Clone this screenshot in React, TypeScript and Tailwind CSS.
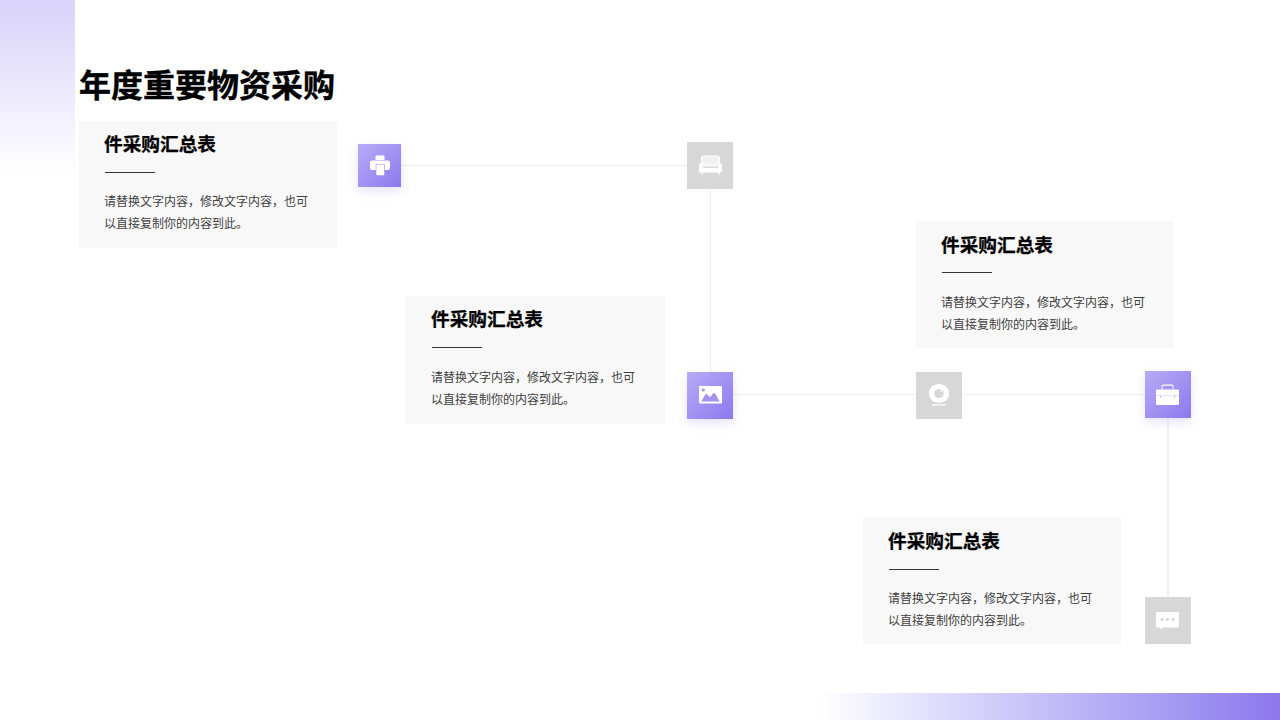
const purple = 'absolute bg-gradient-to-br from-[#b8abf6] to-[#8d79ed] shadow-[0_4px_10px_rgba(141,121,237,0.22)] flex items-center justify-center';
const gray = 'absolute bg-[#d7d7d7] flex items-center justify-center';
const line = 'absolute bg-[#ededed]';

interface CardProps {
    className: string;
    titleClass: string;
    ruleClass: string;
    bodyClass: string;
}

function Card({ className, titleClass, ruleClass, bodyClass }: CardProps) {
    return (
        <div className={`absolute w-[258px] bg-[#f8f8f8] pl-[25px] flex flex-col items-start ${className}`}>
            <div className={`text-[18.67px] leading-[28px] font-bold text-black [-webkit-text-stroke:0.25px_black] ${titleClass}`}>件采购汇总表</div>
            <div className={`w-[50px] h-px bg-[#333333] ml-px ${ruleClass}`}></div>
            <p className={`w-[212px] text-[12px] leading-[22px] text-[#404040] ${bodyClass}`}>
                请替换文字内容，修改文字内容，也可以直接复制你的内容到此。
            </p>
        </div>
    );
}

export default function App() {
    return (
        <div className="relative w-[1280px] h-[720px] overflow-hidden bg-white pl-[79px] pt-[60px] font-['Noto_Sans_CJK_SC','Noto_Sans',sans-serif]">
            {/* corner decorations */}
            <div className="absolute left-0 top-0 w-[75px] h-[174px] bg-gradient-to-b from-[#d9d2fa] to-white"></div>
            <div className="absolute right-0 bottom-0 w-[460px] h-[27px] bg-gradient-to-r from-white to-[#8d78ec]"></div>

            <h1 className="relative text-[32px] leading-[46px] font-bold text-black whitespace-nowrap [-webkit-text-stroke:0.4px_black]">年度重要物资采购</h1>

            {/* connector lines */}
            <div className={`${line} left-[401px] top-[165px] w-[286px] h-px`}></div>
            <div className={`${line} left-[710px] top-[188px] w-px h-[184px]`}></div>
            <div className={`${line} left-[733px] top-[394px] w-[183px] h-px`}></div>
            <div className={`${line} left-[962px] top-[394px] w-[183px] h-px`}></div>
            <div className="absolute bg-[#f3f3f3] left-[1167px] top-[417px] w-[2px] h-[181px]"></div>

            <Card className="left-[79px] top-[121px] h-[127px]" titleClass="mt-[8px]" ruleClass="mt-[15px]" bodyClass="mt-[17px]" />
            <Card className="left-[405px] top-[296px] h-[128px] !w-[260px] !pl-[26px]" titleClass="mt-[8px]" ruleClass="mt-[15px]" bodyClass="mt-[18px]" />
            <Card className="left-[916px] top-[221px] h-[127px]" titleClass="mt-[9px]" ruleClass="mt-[14px]" bodyClass="mt-[18px]" />
            <Card className="left-[863px] top-[517px] h-[127px]" titleClass="mt-[9px]" ruleClass="mt-[15px]" bodyClass="mt-[17px]" />

            {/* printer */}
            <div className={`${purple} left-[358px] top-[144px] w-[43px] h-[43px]`}>
                <svg width="20" height="21" viewBox="0 0 20 21" fill="white">
                    <path d="M6.500 0.500h7a1 1 0 0 1 1 1V5h-9V1.500a1 1 0 0 1 1-1z" />
                    <path d="M2 5.500h16a2 2 0 0 1 2 2V13a2 2 0 0 1-2 2H2a2 2 0 0 1-2-2V7.500a2 2 0 0 1 2-2z" />
                    <path d="M6 9.500h8.500v10a1 1 0 0 1-1 1H7a1 1 0 0 1-1-1z" stroke="#a08cf1" strokeWidth="0.6" />
                </svg>
            </div>

            {/* armchair */}
            <div className={`${gray} left-[687px] top-[142px] w-[46px] h-[46.500px]`}>
                <svg width="23" height="20" viewBox="0 0 23 20">
                    <path d="M5 1h13a2.500 2.500 0 0 1 2.500 2.500V7a2.500 2.500 0 0 0-2.500 2.500V11H5V9.500A2.500 2.500 0 0 0 2.500 7V3.500A2.500 2.500 0 0 1 5 1z" fill="#f1f1f1" stroke="white" strokeWidth="1.200" />
                    <path d="M2 8a2 2 0 0 1 2 2v3h15v-3a2 2 0 0 1 4 0v6a1.500 1.500 0 0 1-1.500 1.500h-.5V19.500h-1.300v-2H3.800v2H2.500v-2H1.500A1.500 1.500 0 0 1 0 16v-6a2 2 0 0 1 2-2z" fill="white" />
                </svg>
            </div>

            {/* picture */}
            <div className={`${purple} left-[687.300px] top-[372px] w-[46px] h-[46.500px]`}>
                <svg width="23" height="18" viewBox="0 0 23 18">
                    <rect x="0" y="0" width="23" height="17.500" rx="1" fill="white" />
                    <circle cx="4.300" cy="4" r="1.600" fill="#a591f2" />
                    <path d="M2 15.500C4 14 5.500 8 7.500 8 9 8 9.500 11 11 11 12.500 11 13.500 7 15 7 17 7 19 14 21 15.500z" fill="#a591f2" />
                </svg>
            </div>

            {/* webcam */}
            <div className={`${gray} left-[916px] top-[372px] w-[46px] h-[46.500px]`}>
                <svg width="22" height="22" viewBox="0 0 22 22">
                    <path fillRule="evenodd" clipRule="evenodd" fill="white" d="M11 0a10.300 9.500 0 1 1 0 19 10.300 9.500 0 0 1 0-19zm0 5a4.700 4.500 0 1 0 0 9 4.700 4.500 0 0 0 0-9z" />
                    <circle cx="13" cy="7" r="0.900" fill="white" />
                    <rect x="4" y="20.300" width="14" height="1.200" fill="white" />
                </svg>
            </div>

            {/* briefcase */}
            <div className={`${purple} left-[1144.700px] top-[371px] w-[46.300px] h-[46.700px]`}>
                <svg width="23" height="21" viewBox="0 0 23 21" fill="white">
                    <path d="M5.500 5.500V2a1.500 1.500 0 0 1 1.500-1.500h9A1.500 1.500 0 0 1 17.500 2v3.500h-1V2.200a.5.500 0 0 0-.5-.5H7a.5.500 0 0 0-.5.5v3.300z" />
                    <path d="M1 5.500h21a1 1 0 0 1 1 1v5.200H0V6.500a1 1 0 0 1 1-1z" />
                    <path d="M0 12.100h4v1.400h.8v-1.400h13.400v1.400h.8v-1.400h4V20a1 1 0 0 1-1 1H1a1 1 0 0 1-1-1z" />
                </svg>
            </div>

            {/* chat bubble */}
            <div className={`${gray} left-[1144.700px] top-[597.300px] w-[46.300px] h-[46.700px]`}>
                <svg width="23" height="18" viewBox="0 0 23 18">
                    <path d="M1 0h21a1 1 0 0 1 1 1v13.500a1 1 0 0 1-1 1H7l-2 2.500-.5-2.500H1a1 1 0 0 1-1-1V1a1 1 0 0 1 1-1z" fill="white" />
                    <circle cx="6" cy="7.500" r="1.300" fill="#c8c8c8" />
                    <circle cx="11.500" cy="7.500" r="1.300" fill="#c8c8c8" />
                    <circle cx="17" cy="7.500" r="1.300" fill="#c8c8c8" />
                </svg>
            </div>
        </div>
    );
}
